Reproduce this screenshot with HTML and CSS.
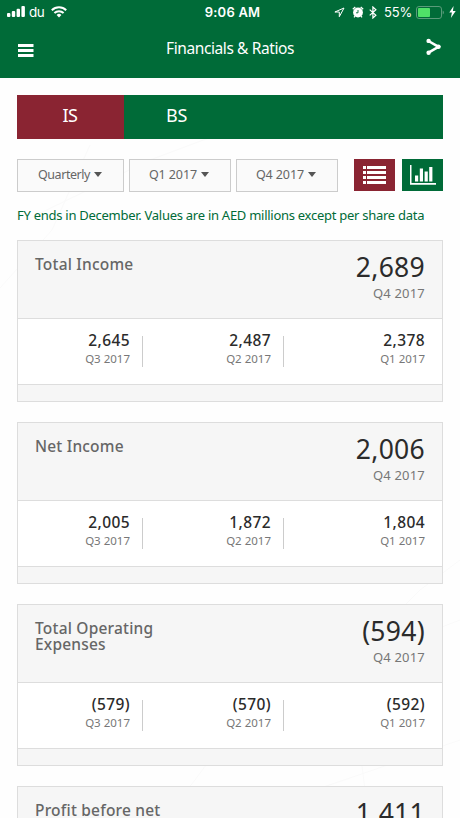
FILE: index.html
```html
<!DOCTYPE html>
<html lang="en">
<head>
    <meta charset="UTF-8">
    <meta name="viewport" content="width=device-width, initial-scale=1.0">
    <title>Financials &amp; Ratios</title>
    <link rel="stylesheet" href="styles.css">
</head>
<body>
    <svg class="bg-lines" width="460" height="818" viewBox="0 0 460 818">
        <path d="M0 288L52 230L90 145M28 219L150 160L230 130M165 818L195 780L217 750L330 670L460 620M285 800L350 778L460 740M360 750L365 790M400 610L420 590L460 560"/>
    </svg>

    <header>
        <div class="status-bar">
            <div class="status-left">
                <svg width="18" height="12" viewBox="0 0 18 12" fill="#fff">
                    <rect x="0" y="7" width="3.4" height="4" rx="1"/>
                    <rect x="4.8" y="5" width="3.4" height="6" rx="1"/>
                    <rect x="9.6" y="2.8" width="3.4" height="8.2" rx="1"/>
                    <rect x="14.4" y="0" width="3.5" height="11" rx="1"/>
                </svg>
                <span class="carrier">du</span>
                <svg width="16" height="12" viewBox="0 0 16 12" fill="none" stroke="#fff" stroke-width="2">
                    <path d="M.8 4.2a10.3 10.3 0 0 1 14.4 0"/>
                    <path d="M3.4 7a6.6 6.6 0 0 1 9.2 0"/>
                    <path d="M8 11.4L5.6 9a3.4 3.4 0 0 1 4.8 0z" fill="#fff" stroke="none"/>
                </svg>
            </div>
            <span class="time">9:06 AM</span>
            <div class="status-right">
                <svg width="11" height="11" viewBox="0 0 11 11" fill="none" stroke="#fff" stroke-width="1">
                    <path d="M10 1L.9 5h4.4v4.7z"/>
                </svg>
                <svg class="alarm" width="12" height="12" viewBox="0 0 12 12">
                    <circle cx="6" cy="6.5" r="4.9" fill="#fff"/>
                    <path d="M.8 3.2L3.3 1M11.2 3.2L8.7 1M3 10.2l-1 1.2M9 10.2l1 1.2" stroke="#fff" stroke-width="1.3"/>
                    <path d="M6 4v2.8H4" fill="none" stroke="#006b38" stroke-width=".9"/>
                </svg>
                <svg class="bluetooth" width="8" height="13" viewBox="0 0 8 13" fill="none" stroke="#fff" stroke-width="1.2">
                    <path d="M.7 3.6l6.2 5.6-3 2.8V1l3 2.8L.7 9.4"/>
                </svg>
                <span class="percent">55%</span>
                <svg class="battery" width="28" height="13" viewBox="0 0 28 13">
                    <rect x=".5" y=".5" width="25" height="12" rx="2.5" fill="none" stroke="#5a9b7a"/>
                    <rect x="2" y="2" width="12" height="9" rx="1" fill="#4fe068"/>
                    <path d="M26.7 4.5v4q1.2-.6 1.2-2t-1.2-2z" fill="#5a9b7a"/>
                </svg>
                <svg width="7" height="12" viewBox="0 0 7 12" fill="#fff">
                    <path d="M4.6 0L.3 6.6h2.6L1.9 12l4.8-7H3.9z"/>
                </svg>
            </div>
        </div>
        <div class="nav-bar">
            <svg class="menu" width="16" height="14" viewBox="0 0 16 14" fill="#fff">
                <rect y="0" width="15.5" height="3"/>
                <rect y="5" width="15.5" height="3"/>
                <rect y="10" width="15.5" height="3"/>
            </svg>
            <h1>Financials &amp; Ratios</h1>
            <svg class="share" width="16" height="18" viewBox="0 0 16 18">
                <path d="M2.5 3L12.5 8.8 2.5 14.6" fill="none" stroke="#fff" stroke-width="2.6"/>
                <g fill="#fff">
                    <circle cx="2.6" cy="2.9" r="2.2"/>
                    <circle cx="12.4" cy="8.8" r="2.3"/>
                    <circle cx="2.6" cy="14.7" r="2.2"/>
                </g>
            </svg>
        </div>
    </header>

    <main>
        <nav class="tabs">
            <div class="tab active">IS</div>
            <div class="tab">BS</div>
        </nav>

        <div class="filters">
            <div class="select">Quarterly <i class="caret"></i></div>
            <div class="select narrow">Q1 2017 <i class="caret"></i></div>
            <div class="select narrow">Q4 2017 <i class="caret"></i></div>
            <div class="view-btn list">
                <svg width="23" height="18" viewBox="0 0 23 18" fill="#fff">
                    <path d="M0 0h3v3H0zM4 0h19v3H4zM0 5h3v3H0zM4 5h19v3H4zM0 10h3v3H0zM4 10h19v3H4zM0 15h3v3H0zM4 15h19v3H4z"/>
                </svg>
            </div>
            <div class="view-btn chart">
                <svg width="26" height="20" viewBox="0 0 26 20" fill="#fff">
                    <path d="M0 0h1.5v18H26v1.7H0zM5 10.5h3.2v6H5zM9.8 3.5H13v13H9.8zM14.6 6.5h3.2v10h-3.2zM19.2 2h3.2v14.5h-3.2z"/>
                </svg>
            </div>
        </div>

        <p class="note">FY ends in December. Values are in AED millions except per share data</p>

        <section class="card">
            <div class="card-head">
                <h2>Total Income</h2>
                <div class="current"><b>2,689</b><span>Q4 2017</span></div>
            </div>
            <div class="history">
                <div class="quarter"><b>2,645</b><span>Q3 2017</span></div>
                <div class="quarter"><b>2,487</b><span>Q2 2017</span></div>
                <div class="quarter"><b>2,378</b><span>Q1 2017</span></div>
            </div>
            <div class="card-foot"></div>
        </section>

        <section class="card">
            <div class="card-head">
                <h2>Net Income</h2>
                <div class="current"><b>2,006</b><span>Q4 2017</span></div>
            </div>
            <div class="history">
                <div class="quarter"><b>2,005</b><span>Q3 2017</span></div>
                <div class="quarter"><b>1,872</b><span>Q2 2017</span></div>
                <div class="quarter"><b>1,804</b><span>Q1 2017</span></div>
            </div>
            <div class="card-foot"></div>
        </section>

        <section class="card">
            <div class="card-head">
                <h2>Total Operating Expenses</h2>
                <div class="current"><b>(594)</b><span>Q4 2017</span></div>
            </div>
            <div class="history">
                <div class="quarter"><b>(579)</b><span>Q3 2017</span></div>
                <div class="quarter"><b>(570)</b><span>Q2 2017</span></div>
                <div class="quarter"><b>(592)</b><span>Q1 2017</span></div>
            </div>
            <div class="card-foot"></div>
        </section>

        <section class="card">
            <div class="card-head">
                <h2>Profit before net</h2>
                <div class="current"><b>1,411</b></div>
            </div>
        </section>
    </main>
</body>
</html>
```

FILE: styles.css
```css
* {
    box-sizing: border-box;
}

html {
    overflow: hidden;
}

body {
    margin: 0;
    height: 818px;
    overflow: hidden;
    background: #fefefe;
    font-family: "Noto Sans", "Open Sans", sans-serif;
    color: #2b2b2b;
}

svg {
    display: block;
    flex: none;
}

.bg-lines {
    position: absolute;
    top: 0;
    left: 0;
    z-index: -1;
    fill: none;
    stroke: #fafafa;
}

header {
    height: 78px;
    background: #006b38;
    color: #fff;
}

.status-bar {
    display: grid;
    grid-template-columns: 1fr auto 1fr;
    align-items: center;
    height: 24px;
    padding: 0 5px 0 7px;
    font-family: Inter, sans-serif;
    font-size: 13px;
}

.status-left, .status-right {
    display: flex;
    align-items: center;
}

.status-right {
    justify-content: flex-end;
}

.carrier {
    margin: 0 7px 0 4px;
    font-size: 13.5px;
    letter-spacing: -0.5px;
}

.time {
    padding-left: 3px;
    font-weight: 600;
    letter-spacing: 0.2px;
}

.alarm {
    margin-left: 7px;
}

.bluetooth {
    margin: 0 7px 0 5px;
}

.percent {
    letter-spacing: -0.2px;
}

.battery {
    margin: 0 5px 0 4px;
}

.status-right svg:last-child {
    margin-right: -1px;
}

.nav-bar {
    display: flex;
    align-items: center;
    height: 48px;
    padding: 0 18px;
}

.menu {
    margin-top: 6px;
}

h1 {
    flex: 1;
    margin: 0 0 1px;
    text-align: center;
    font-size: 15.5px;
    font-weight: 400;
    letter-spacing: -0.4px;
}

.share {
    margin-top: -2px;
}

main {
    padding: 17px 17px 0;
}

.tabs {
    display: flex;
    height: 44px;
    background: #006b38;
}

.tab {
    width: 106px;
    padding: 8px 1px 0 0;
    text-align: center;
    color: #fff;
    font-size: 18px;
    line-height: 25px;
    letter-spacing: -0.4px;
}

.tab.active {
    width: 107px;
    background: #8a2432;
}

.filters {
    display: flex;
    height: 33px;
    margin-top: 20px;
}

.select {
    display: flex;
    align-items: center;
    justify-content: center;
    gap: 4px;
    width: 107px;
    margin-right: 5px;
    padding: 0 1px 2px 0;
    border: 1px solid #ccc;
    background: #fafafa;
    color: #666;
    font-size: 12.5px;
    letter-spacing: -0.45px;
}

.select.narrow {
    width: 102px;
    padding-right: 2px;
    letter-spacing: -0.1px;
}

.caret {
    border: 4.5px solid transparent;
    border-top: 5px solid #555;
    border-bottom: 0;
}

.view-btn {
    display: flex;
    align-items: center;
    justify-content: center;
    width: 41px;
    height: 32px;
    background: #8a2432;
}

.view-btn.list {
    margin: 0 7px 0 auto;
}

.view-btn.chart {
    background: #006b38;
}

.note {
    margin: 13px 0 15px;
    color: #006b38;
    font-size: 13px;
    line-height: 20px;
    letter-spacing: -0.27px;
    white-space: nowrap;
}

.card {
    height: 162px;
    margin-bottom: 20px;
    border: 1px solid #ddd;
    background: #fff;
}

.card-head {
    display: flex;
    justify-content: space-between;
    height: 78px;
    padding: 0 17px;
    border-bottom: 1px solid #ddd;
    background: #f6f6f6;
}

h2 {
    width: 150px;
    margin: 15px 0 0;
    color: #666;
    font-size: 15.5px;
    font-weight: 500;
    line-height: 16px;
    letter-spacing: 0.2px;
}

.card b, .card span {
    display: block;
}

.current {
    padding-top: 9px;
    text-align: right;
}

.current b {
    font-size: 26.5px;
    font-weight: 400;
    line-height: 35px;
    letter-spacing: 0.3px;
}

.current span {
    margin-top: -1px;
    color: #777;
    font-size: 13px;
    line-height: 18px;
    letter-spacing: 0.2px;
}

.history {
    display: flex;
    height: 65px;
    padding-top: 17px;
}

.quarter {
    width: 141px;
    height: 31px;
    padding-right: 17px;
    text-align: right;
}

.quarter:not(:last-child) {
    padding-right: 12px;
    border-right: 1px solid #ccc;
}

.quarter:first-child {
    width: 125px;
}

.quarter:last-child {
    flex: 1;
}

.quarter b {
    margin-top: -6px;
    font-size: 15.5px;
    font-weight: 500;
    line-height: 21px;
    letter-spacing: 0.4px;
}

.quarter span {
    color: #777;
    font-size: 11.5px;
    line-height: 16px;
}

.card-foot {
    height: 17px;
    border-top: 1px solid #ddd;
    background: #f6f6f6;
}
```
